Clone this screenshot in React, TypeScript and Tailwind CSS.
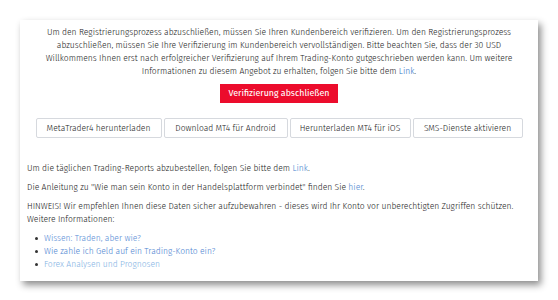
const buttons = [
  { label: "MetaTrader4 herunterladen", w: "w-[126px]" },
  { label: "Download MT4 für Android", w: "w-[124px]" },
  { label: "Herunterladen MT4 für iOS", w: "w-[121px]" },
  { label: "SMS-Dienste aktivieren", w: "w-[110px]" },
];

const links = [
  { label: "Wissen: Traden, aber wie?", color: "text-[#5a8ed6]" },
  { label: "Wie zahle ich Geld auf ein Trading-Konto ein?", color: "text-[#4f86d2]" },
  { label: "Forex Analysen und Prognosen", color: "text-[#86b4e4]" },
];

export default function App() {
  return (
    <div className="h-[300px] w-[558px] bg-white px-[20px] pt-[20px] font-['Fira_Sans_Condensed',sans-serif] text-[9.45px] font-light leading-[13px] text-[#1f1f1f]">
      <div className="h-[261px] w-[518px] bg-white px-[7px] pt-[6px] shadow-[3px_4px_7px_rgba(0,0,0,0.45)]">
        <p className="text-center">
          Um den Registrierungsprozess abzuschließen, müssen Sie Ihren Kundenbereich verifizieren. Um den Registrierungsprozess
          <br />
          abzuschließen, müssen Sie Ihre Verifizierung im Kundenbereich vervollständigen. Bitte beachten Sie, dass der 30 USD
          <br />
          Willkommens Ihnen erst nach erfolgreicher Verifizierung auf Ihrem Trading-Konto gutgeschrieben werden kann. Um weitere
          <br />
          Informationen zu diesem Angebot zu erhalten, folgen Sie bitte dem <a className="text-[#2f76c8]">Link</a>.
        </p>
        <div className="mt-[6px] flex justify-center">
          <button className="h-[19px] w-[118px] bg-[#ec0c2c] text-[9.8px] font-normal text-white">
            Verifizierung abschließen
          </button>
        </div>
        <div className="mt-[15px] flex justify-center gap-[2px]">
          {buttons.map((b) => (
            <button
              key={b.label}
              className={`h-[20px] ${b.w} rounded-[2px] border border-[#d6d9de] bg-white text-[#1f1f1f]`}
            >
              {b.label}
            </button>
          ))}
        </div>
        <p className="mt-[24px]">
          Um die täglichen Trading-Reports abzubestellen, folgen Sie bitte dem <a className="text-[#4a86d0]">Link</a>.
        </p>
        <p className="mt-[6px]">
          Die Anleitung zu "Wie man sein Konto in der Handelsplattform verbindet" finden Sie{" "}
          <a className="text-[#4a86d0]">hier</a>.
        </p>
        <p className="mt-[6px]">
          HINWEIS! Wir empfehlen Ihnen diese Daten sicher aufzubewahren - dieses wird Ihr Konto vor unberechtigten Zugriffen schützen.
          <br />
          Weitere Informationen:
        </p>
        <ul className="mt-[6px] pl-[8px]">
          {links.map((l) => (
            <li key={l.label} className="flex items-center gap-[6px]">
              <span className="h-[3px] w-[3px] rounded-full bg-[#333]" />
              <a className={l.color}>{l.label}</a>
            </li>
          ))}
        </ul>
      </div>
    </div>
  );
}
